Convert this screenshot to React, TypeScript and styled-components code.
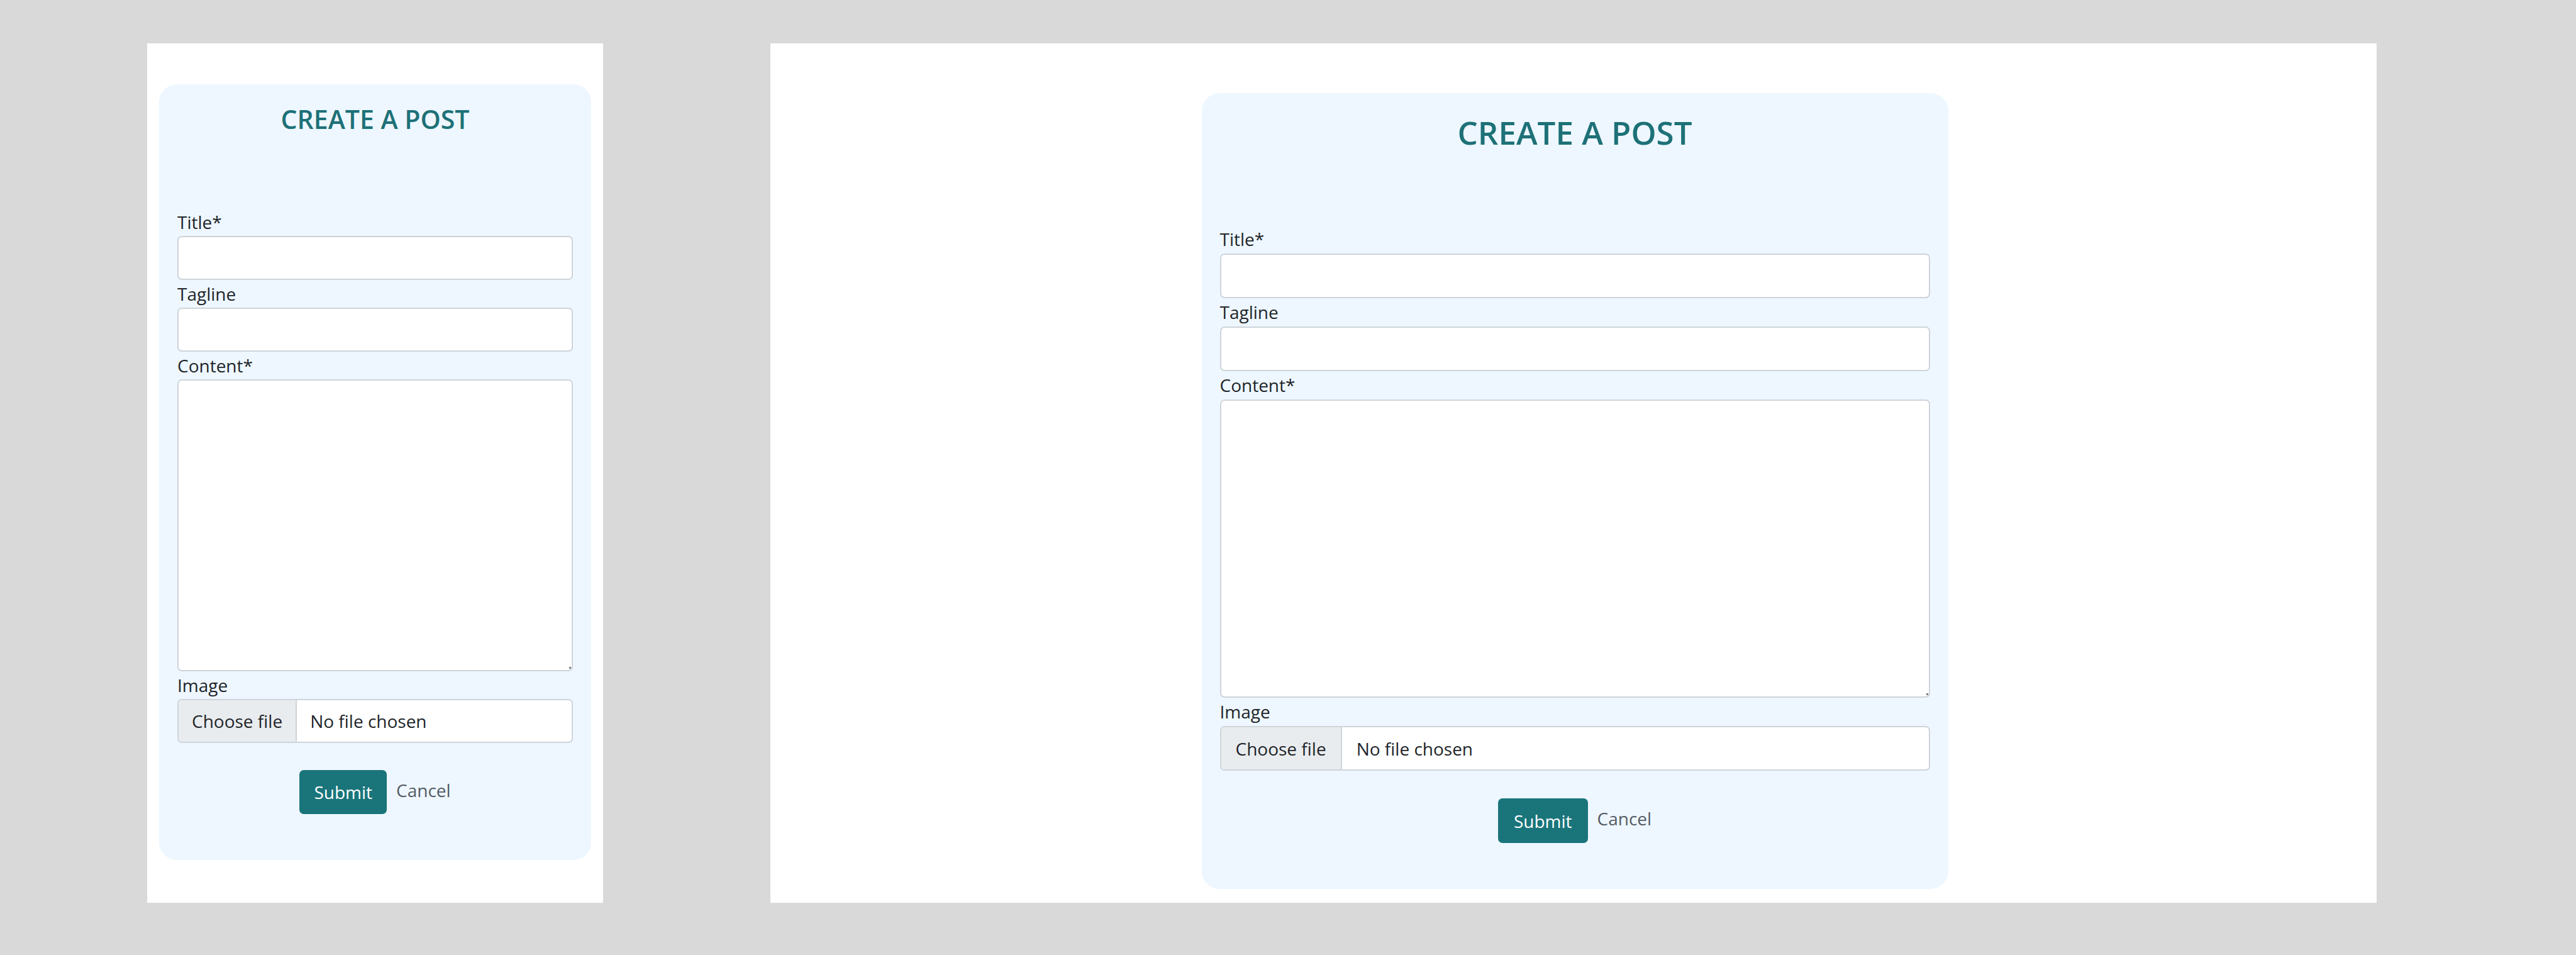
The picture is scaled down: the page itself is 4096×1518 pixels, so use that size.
import React, { useId, useState } from "react";
import styled, { createGlobalStyle, css } from "styled-components";

type Size = "narrow" | "wide";

const sizes = {
  narrow: {
    panelPadding: "65px 19px 68px",
    cardWidth: "100%",
    cardPadding: "30px 29px 73px",
    title: "41px",
    titleLine: "50px",
    labelLine: "44px",
    control: "70px",
    area: "464px",
    filePad: "21px",
    buttonPad: "23px",
    actionsGap: "43px",
  },
  wide: {
    panelPadding: "79px 25px 21px 29px",
    cardWidth: "1187px",
    cardPadding: "31px 29px 73px",
    title: "51px",
    titleLine: "62px",
    labelLine: "45px",
    control: "71px",
    area: "474px",
    filePad: "23px",
    buttonPad: "25px",
    actionsGap: "44px",
  },
};

const GlobalStyle = createGlobalStyle`
  *, *::before, *::after { box-sizing: border-box; }
  body {
    margin: 0;
    background: #d9d9d9;
    color: #212529;
    font-family: "Open Sans", "Noto Sans", sans-serif;
  }
`;

const Board = styled.main`
  display: grid;
  grid-template-columns: 725fr 2554fr;
  column-gap: 266px;
  padding: 69px 317px 83px 234px;
`;

const Panel = styled.section<{ $size: Size }>`
  display: flex;
  justify-content: center;
  align-items: flex-start;
  background: #fff;
  padding: ${(p) => sizes[p.$size].panelPadding};
`;

const Card = styled.form<{ $size: Size }>`
  display: flex;
  flex-direction: column;
  width: 100%;
  max-width: ${(p) => sizes[p.$size].cardWidth};
  padding: ${(p) => sizes[p.$size].cardPadding};
  border-radius: 28px;
  background: #eef7ff;
  font-size: 28px;
`;

const Title = styled.h1<{ $size: Size }>`
  margin: 0 0 117px;
  color: #1d7177;
  font-size: ${(p) => sizes[p.$size].title};
  line-height: ${(p) => sizes[p.$size].titleLine};
  font-weight: 600;
  text-align: center;
  text-transform: uppercase;
`;

const Label = styled.label<{ $size: Size }>`
  line-height: ${(p) => sizes[p.$size].labelLine};
`;

const controlStyle = css`
  display: block;
  width: 100%;
  margin: 0;
  border: 2px solid #ced4da;
  border-radius: 7px;
  background: #fff;
  color: inherit;
  font: inherit;
`;

const TextInput = styled.input<{ $size: Size }>`
  ${controlStyle}
  height: ${(p) => sizes[p.$size].control};
  padding: 0 22px;
`;

/* The small dark mark in the lower right corner stands in for the resize grip. */
const TextArea = styled.textarea<{ $size: Size }>`
  ${controlStyle}
  height: ${(p) => sizes[p.$size].area};
  padding: 11px 22px;
  resize: none;
  background: #fff linear-gradient(#777c82, #777c82) right 1px bottom 2px / 3px 3px no-repeat;
`;

const FileBox = styled.div<{ $size: Size }>`
  ${controlStyle}
  position: relative;
  display: flex;
  height: ${(p) => sizes[p.$size].control};
  overflow: hidden;
`;

const FileInput = styled.input`
  position: absolute;
  inset: 0;
  width: 100%;
  opacity: 0;
  cursor: pointer;
`;

const FileName = styled.span<{ $size: Size }>`
  display: flex;
  align-items: center;
  padding: 0 ${(p) => sizes[p.$size].filePad};
`;

const FileButton = styled(FileName)`
  border-right: 2px solid #ced4da;
  background: #e9ecef;
`;

const Actions = styled.div<{ $size: Size }>`
  display: flex;
  justify-content: center;
  gap: 15px;
  margin-top: ${(p) => sizes[p.$size].actionsGap};
`;

const SubmitButton = styled.button<{ $size: Size }>`
  height: ${(p) => sizes[p.$size].control};
  padding: 0 ${(p) => sizes[p.$size].buttonPad};
  border: 0;
  border-radius: 7px;
  background: #1a757b;
  color: #fff;
  font: inherit;
`;

const CancelLink = styled.a`
  align-self: center;
  padding-bottom: 7px;
  color: #555c66;
  text-decoration: none;
`;

function PostForm({ size }: { size: Size }) {
  const id = useId();
  const [fileName, setFileName] = useState("No file chosen");

  return (
    <Card $size={size} onSubmit={(e) => e.preventDefault()}>
      <Title $size={size}>Create a post</Title>
      <Label $size={size} htmlFor={`${id}-title`}>Title*</Label>
      <TextInput $size={size} id={`${id}-title`} type="text" name="title" />
      <Label $size={size} htmlFor={`${id}-tagline`}>Tagline</Label>
      <TextInput $size={size} id={`${id}-tagline`} type="text" name="tagline" />
      <Label $size={size} htmlFor={`${id}-content`}>Content*</Label>
      <TextArea $size={size} id={`${id}-content`} name="content" />
      <Label $size={size} htmlFor={`${id}-image`}>Image</Label>
      <FileBox $size={size}>
        <FileButton $size={size}>Choose file</FileButton>
        <FileName $size={size}>{fileName}</FileName>
        <FileInput
          id={`${id}-image`}
          type="file"
          name="image"
          accept="image/*"
          onChange={(e) => setFileName(e.target.files?.[0]?.name ?? "No file chosen")}
        />
      </FileBox>
      <Actions $size={size}>
        <SubmitButton $size={size} type="submit">Submit</SubmitButton>
        <CancelLink href="#">Cancel</CancelLink>
      </Actions>
    </Card>
  );
}

export default function App() {
  return (
    <>
      <GlobalStyle />
      <Board>
        <Panel $size="narrow">
          <PostForm size="narrow" />
        </Panel>
        <Panel $size="wide">
          <PostForm size="wide" />
        </Panel>
      </Board>
    </>
  );
}
